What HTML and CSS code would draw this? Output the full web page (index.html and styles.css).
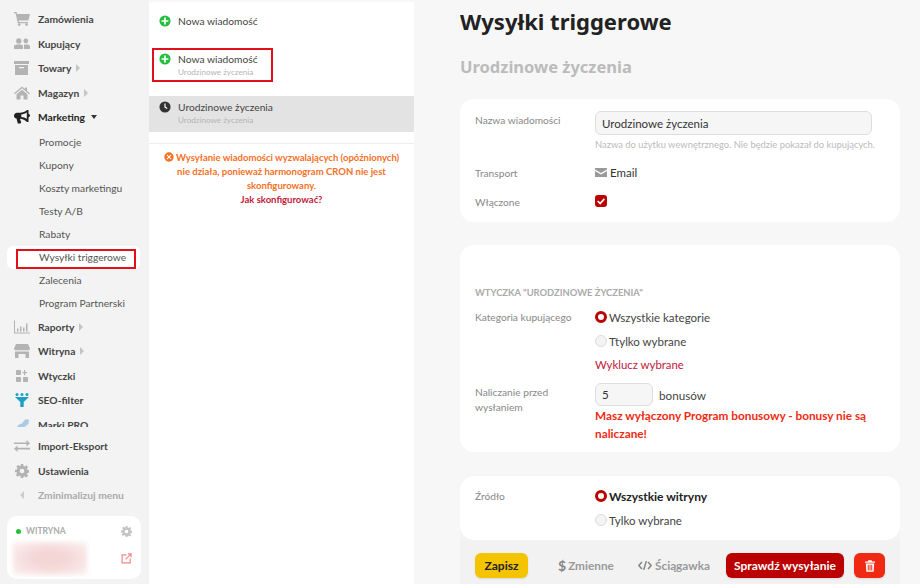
FILE: index.html
```html
<!DOCTYPE html>
<html lang="pl">
<head>
    <meta charset="UTF-8">
    <meta name="viewport" content="width=device-width, initial-scale=1.0">
    <title>Wysyłki triggerowe</title>
    <link rel="stylesheet" href="styles.css">
</head>
<body>

<aside class="sidebar">
    <nav class="menu menu-scroll">
        <a class="menu-item">
            <svg class="menu-icon" viewBox="0 0 16 14"><path d="M0 0h2.600l.5 2H16l-1.600 6.600H4.600l.3 1.400H14v1.300H3.800L1.600 1.300H0z"/><circle cx="5.200" cy="12.600" r="1.400"/><circle cx="12.600" cy="12.600" r="1.400"/></svg>
            Zamówienia
        </a>
        <a class="menu-item">
            <svg class="menu-icon" viewBox="0 0 16 12"><circle cx="4.800" cy="3" r="2.700"/><circle cx="11.800" cy="3" r="2.400"/><path d="M0 11V8.500C0 7 1.500 6.500 4.800 6.500S9 7 9 8.500V11zM10 11V7c.6-.3 1-.4 2-.4 2.700 0 4 .6 4 2V11z"/></svg>
            Kupujący
        </a>
        <a class="menu-item">
            <svg class="menu-icon" viewBox="0 0 16 14"><path d="M0 0h15v3H0zM1 4h13v10H1zM5 6v1.300h5V6z" fill-rule="evenodd"/></svg>
            Towary <span class="arrow-right"></span>
        </a>
        <a class="menu-item">
            <svg class="menu-icon" viewBox="0 0 16 13"><path d="M8 0l3 2.500V1h2v3.200L16 6.800l-.8.900L8 1.800.8 7.700 0 6.800zM8 3.300l5.500 4.500V13H9.500V9h-3v4h-4V7.800z"/></svg>
            Magazyn <span class="arrow-right"></span>
        </a>
        <a class="menu-item is-open">
            <svg class="menu-icon" viewBox="0 0 16 14"><path d="M13 0h1.500v3.800c1 .3 1.500 1 1.500 1.800s-.5 1.500-1.500 1.800V12H13c-1.800-2-4.500-3.200-7-3.300l1.200 3.800-.6 1H3.800l-1.300-5C1 8.500 0 7.300 0 5.800 0 4 1.300 2.700 3 2.700h3C8.500 2.700 11.200 2 13 0zM12.800 2.500C11.300 3.600 9.300 4.200 7.300 4.400v2.500c2 .2 4 .8 5.500 1.900z" fill-rule="evenodd"/></svg>
            Marketing <span class="arrow-down"></span>
        </a>
        <div class="submenu">
            <a>Promocje</a>
            <a>Kupony</a>
            <a>Koszty marketingu</a>
            <a>Testy A/B</a>
            <a>Rabaty</a>
            <a class="is-current"><span>Wysyłki triggerowe</span></a>
            <a>Zalecenia</a>
            <a>Program Partnerski</a>
        </div>
        <a class="menu-item">
            <svg class="menu-icon" viewBox="0 0 16 13"><path d="M0 0h1v12h15v1H0zM3 8h1.500v3H3zM6 6h1.500v5H6zM9 7h1.500v4H9zM12 3h1.500v8H12z"/></svg>
            Raporty <span class="arrow-right"></span>
        </a>
        <a class="menu-item">
            <svg class="menu-icon" viewBox="0 0 16 14"><path d="M2 0h12l2 4.500c0 1-.8 1.800-1.800 1.800H1.800C.8 6.300 0 5.500 0 4.500zM1 7.500h14V14h-3.500v-4h-7v4H1z"/></svg>
            Witryna <span class="arrow-right"></span>
        </a>
        <a class="menu-item">
            <svg class="menu-icon small" viewBox="0 0 12 12"><rect width="5" height="5" rx=".8"/><path d="M8 0h1.200v2H11v1.200H9.200v2H8v-2H6.500V2H8z"/><rect y="7" width="5" height="5" rx=".8"/><rect x="7" y="7" width="5" height="5" rx=".8"/></svg>
            Wtyczki
        </a>
        <a class="menu-item">
            <svg class="menu-icon teal" viewBox="0 0 14 14"><circle cx="2" cy="1.500" r="1.500"/><circle cx="7" cy="1.500" r="1.500"/><circle cx="12" cy="1.500" r="1.500"/><path d="M0 4h14L8.700 9v5H5.300V9z"/></svg>
            SEO-filter
        </a>
        <a class="menu-item">
            <svg class="menu-icon sky" viewBox="0 0 16 13"><path d="M0 12l5-6 3-1 3-4h4l-.6 4.500-4 3-1.500 3.500H6l1-3-3 1-2 3z"/></svg>
            Marki PRO
        </a>
    </nav>
    <nav class="menu menu-fixed">
        <a class="menu-item">
            <svg class="menu-icon" viewBox="0 0 16 12"><path d="M0 2.500h12.500V0L16 3.200l-3.500 3.200V4H0zM16 7.800H3.500V5.500L0 8.800 3.500 12V9.500H16z"/></svg>
            Import-Eksport
        </a>
        <a class="menu-item">
            <svg class="menu-icon" viewBox="0 0 24 24"><use href="#gear"/></svg>
            Ustawienia
        </a>
        <a class="menu-item is-muted">
            <span class="arrow-left"></span>
            Zminimalizuj menu
        </a>
    </nav>
    <div class="site-card">
        <div class="site-head">
            <span class="dot"></span>
            <span class="site-label">WITRYNA</span>
            <svg class="site-gear" viewBox="0 0 24 24"><use href="#gear"/></svg>
        </div>
        <div class="site-body">
            <div class="site-blur"></div>
            <svg class="site-link" viewBox="0 0 12 12" fill="none" stroke="#e88" stroke-width="1.300"><path d="M6 2H1.200v8.800H10V6M5 7l5.500-5.500M7.500 1h3.500v3.500"/></svg>
        </div>
    </div>
</aside>

<section class="messages">
    <a class="msg-row">
        <svg class="msg-icon" viewBox="0 0 14 14"><circle cx="7" cy="7" r="6.500" fill="#22c03c"/><path d="M6 3h2v3h3v2H8v3H6V8H3V6h3z" fill="#fff"/></svg>
        <div>Nowa wiadomość</div>
    </a>
    <a class="msg-row is-marked">
        <svg class="msg-icon" viewBox="0 0 14 14"><circle cx="7" cy="7" r="6.500" fill="#22c03c"/><path d="M6 3h2v3h3v2H8v3H6V8H3V6h3z" fill="#fff"/></svg>
        <div>Nowa wiadomość<small>Urodzinowe życzenia</small></div>
    </a>
    <a class="msg-row is-selected">
        <svg class="msg-icon" viewBox="0 0 14 14"><circle cx="7" cy="7" r="6.500" fill="#333"/><path d="M6.300 3h1.400v3.700l2.300 1.400-.7 1.200-3-1.800z" fill="#fff"/></svg>
        <div>Urodzinowe życzenia<small>Urodzinowe życzenia</small></div>
    </a>
    <div class="cron-note">
        <svg class="cron-icon" viewBox="0 0 14 14"><circle cx="7" cy="7" r="6.500" fill="#f5701f"/><path d="M4.500 3.500L7 6l2.500-2.500 1 1L8 7l2.500 2.500-1 1L7 8l-2.500 2.500-1-1L6 7 3.500 4.500z" fill="#fff"/></svg>
        Wysyłanie wiadomości wyzwalających (opóźnionych) nie działa, ponieważ harmonogram CRON nie jest skonfigurowany.
        <a>Jak skonfigurować?</a>
    </div>
</section>

<main class="content">
    <div class="content-scroll">
        <h1>Wysyłki triggerowe</h1>
        <h2>Urodzinowe życzenia</h2>

        <div class="card card-first">
            <div class="field">
                <label>Nazwa wiadomości</label>
                <div>
                    <input class="text-input" type="text" value="Urodzinowe życzenia">
                    <p class="hint">Nazwa do użytku wewnętrznego. Nie będzie pokazał do kupujących.</p>
                </div>
            </div>
            <div class="field">
                <label>Transport</label>
                <div class="value">
                    <svg class="mail-icon" viewBox="0 0 12 9"><path d="M0 0h12v1.500L6 5 0 1.500zM0 3l6 3.500L12 3v6H0z"/></svg>
                    Email
                </div>
            </div>
            <div class="field">
                <label>Włączone</label>
                <div class="value"><span class="checkbox"><svg viewBox="0 0 12 12"><path d="M2 6l3 3 5-5.500" fill="none" stroke="#fff" stroke-width="2"/></svg></span></div>
            </div>
        </div>

        <div class="card card-plugin">
            <h3>WTYCZKA "URODZINOWE ŻYCZENIA"</h3>
            <div class="field field-options">
                <label>Kategoria kupującego</label>
                <div class="options">
                    <div class="option"><span class="radio is-on"></span>Wszystkie kategorie</div>
                    <div class="option"><span class="radio"></span>Ttylko wybrane</div>
                    <a class="red-link">Wyklucz wybrane</a>
                </div>
            </div>
            <div class="field">
                <label>Naliczanie przed wysłaniem</label>
                <div>
                    <div class="bonus"><input class="num-input" type="text" value="5"> bonusów</div>
                    <p class="warning">Masz wyłączony Program bonusowy - bonusy nie są naliczane!</p>
                </div>
            </div>
        </div>

        <div class="card card-source">
            <div class="field field-options">
                <label>Źródło</label>
                <div class="options">
                    <div class="option is-bold"><span class="radio is-on"></span>Wszystkie witryny</div>
                    <div class="option"><span class="radio"></span>Tylko wybrane</div>
                </div>
            </div>
        </div>
    </div>

    <div class="actions">
        <button class="btn-save">Zapisz</button>
        <a class="action-link link-vars"><span class="dollar">$</span>Zmienne</a>
        <a class="action-link link-help"><svg class="code" viewBox="0 0 16 12" fill="none" stroke="#888" stroke-width="1.800"><path d="M4.500 2L1 6l3.500 4M11.500 2L15 6l-3.500 4M9.500 1L6.500 11"/></svg>Ściągawka</a>
        <button class="btn-test">Sprawdź wysyłanie</button>
        <button class="btn-delete"><svg viewBox="0 0 12 14"><path d="M4 0h4l.6 1.500H12V3H0V1.500h3.400zM1 4h10l-.6 10H1.600zM3.300 5.500v7h1.200v-7zM5.400 5.500v7h1.200v-7zM7.500 5.500v7h1.200v-7z" fill="#fff" fill-rule="evenodd"/></svg></button>
    </div>
</main>

<svg class="defs" width="0" height="0">
    <symbol id="gear" viewBox="0 0 24 24"><path fill-rule="evenodd" d="M10 0h4l.7 3.400 2 .8L19.600 2.300l2.800 2.800-1.900 2.900.8 2 3.400.7v4l-3.400.7-.8 2 1.900 2.900-2.800 2.800-2.900-1.900-2 .8L14 24h-4l-.7-3.400-2-.8-2.900 1.900-2.800-2.800 1.900-2.900-.8-2L0 14v-4l3.400-.7.800-2-1.900-2.900 2.800-2.800 2.900 1.900 2-.8zM12 8a4 4 0 1 0 0 8 4 4 0 0 0 0-8z"/></symbol>
</svg>

</body>
</html>
```

FILE: styles.css
```css
* {
    box-sizing: border-box;
}

body {
    font-family: Lato, "Noto Sans", Arial, sans-serif;
    margin: 0;
    height: 584px;
    overflow: hidden;
    display: flex;
    background-color: #f7f7f7;
    color: #333;
}

a {
    text-decoration: none;
    color: inherit;
}

.defs {
    position: absolute;
}

/* left menu */
.sidebar {
    width: 149px;
    flex-shrink: 0;
    background-color: #f3f3f3;
    padding-top: 7px;
}

.menu-scroll {
    height: 420px;
    overflow: hidden;
}

.menu-fixed {
    margin-top: 7px;
}

.menu-item {
    display: flex;
    align-items: center;
    height: 24.5px;
    padding-left: 14px;
    font-size: 10.250px;
    font-weight: 700;
    color: #444;
}

.menu-item.is-open {
    color: #222;
}

.menu-item.is-muted {
    color: #aaa;
}

.menu-icon {
    width: 16px;
    height: 14px;
    margin-right: 8px;
    fill: #b3b3b3;
    flex-shrink: 0;
}

.menu-icon.small {
    width: 12px;
    height: 12px;
    margin: 0 10px 0 2px;
}

.is-open .menu-icon {
    fill: #222;
}

.menu-icon.teal {
    fill: #1e9fc4;
}

.menu-icon.sky {
    fill: #a8cbe6;
}

.arrow-right,
.arrow-left,
.arrow-down {
    display: inline-block;
    width: 0;
    height: 0;
    border-style: solid;
}

.arrow-right {
    margin-left: 5px;
    border-width: 4px 0 4px 4px;
    border-color: transparent transparent transparent #c4c4c4;
}

.arrow-left {
    margin: 0 14px 0 6px;
    border-width: 4px 4px 4px 0;
    border-color: transparent #ccc transparent transparent;
}

.arrow-down {
    margin-left: 6px;
    border-width: 4px 3.500px 0;
    border-color: #333 transparent transparent;
}

.submenu {
    margin-top: 1px;
}

.submenu a {
    display: block;
    height: 23px;
    line-height: 23px;
    padding-left: 39px;
    font-size: 10.250px;
    color: #555;
}

.submenu a.is-current {
    margin: .5px 9px -.5px 7px;
    padding: 3px 0 0;
    background-color: #fff;
    border-radius: 6px;
}

.is-current span {
    display: block;
    margin-left: 9px;
    height: 20px;
    line-height: 13px;
    padding-left: 21px;
    border: 2px solid #e1101a;
    width: 120px;
    white-space: nowrap;
}

/* site box */
.site-card {
    margin: 8px 8px 0 7px;
    height: 63px;
    padding: 10px 6px;
    background-color: #fff;
    border-radius: 10px;
}

.site-head {
    display: flex;
    align-items: center;
    padding-left: 3px;
}

.dot {
    width: 5px;
    height: 5px;
    border-radius: 50%;
    background-color: #22c03c;
    margin-right: 5px;
}

.site-label {
    font-size: 8.500px;
    font-weight: 700;
    color: #aaa;
    flex-grow: 1;
}

.site-gear {
    width: 11px;
    height: 11px;
    fill: #c4c4c4;
    margin-right: 3px;
}

.site-body {
    display: flex;
    align-items: center;
    justify-content: space-between;
    margin-top: 5px;
}

.site-blur {
    width: 74px;
    height: 33px;
    background: radial-gradient(ellipse at center, #f4d6d6 30%, #fcf2f2 100%);
    filter: blur(2px);
}

.site-link {
    width: 11px;
    height: 11px;
    margin-right: 3px;
}

/* middle column */
.messages {
    width: 265px;
    flex-shrink: 0;
    background-color: #fff;
    padding-top: 1px;
    border-top: 2px solid #f7f7f7;
}

.msg-row {
    display: flex;
    padding: 0 10px;
    font-size: 10.250px;
    color: #444;
    line-height: 15px;
}

.msg-row:first-child {
    height: 36px;
    padding-top: 11px;
}

.msg-row.is-marked {
    margin: 9px 0 14px 3px;
    width: 121px;
    height: 34px;
    padding: 2px 0 0 5px;
    border: 2px solid #e1101a;
}

.msg-row.is-selected {
    height: 36px;
    padding-top: 4px;
    background-color: #e3e3e3;
}

.msg-icon {
    width: 12px;
    height: 12px;
    margin: 1px 7px 0 0;
    flex-shrink: 0;
}

.msg-row small {
    display: block;
    font-size: 8.150px;
    line-height: 10px;
    color: #b5b5b5;
}

.cron-note {
    margin-top: 11px;
    padding: 7px 10px 0;
    border-top: 1px solid #eee;
    text-align: center;
    font-size: 9.500px;
    font-weight: 700;
    line-height: 14px;
    color: #f5701f;
}

.cron-note a {
    display: block;
    color: #c0203a;
}

.cron-icon {
    width: 10px;
    height: 10px;
    vertical-align: -1px;
}

/* main column */
.content {
    flex-grow: 1;
    padding: 0 21px 0 46px;
    display: flex;
    flex-direction: column;
    height: 584px;
}

.content-scroll {
    height: 540px;
    overflow: hidden;
}

h1 {
    font-family: "Noto Sans", Arial, sans-serif;
    font-size: 22px;
    font-weight: 700;
    line-height: 28px;
    margin: 7px 0 0;
    color: #222;
}

h2 {
    font-family: "Noto Sans", Arial, sans-serif;
    font-size: 16.500px;
    font-weight: 700;
    line-height: 22px;
    margin: 21px 0 0;
    color: #bbb;
}

.card {
    background-color: #fff;
    border-radius: 14px;
    padding: 12px 15px;
}

.card-first {
    height: 123px;
    margin-top: 21px;
}

.card-plugin {
    height: 207px;
    margin-top: 23px;
    padding-top: 41px;
}

.card-source {
    height: 64px;
    margin-top: 24px;
    padding-top: 8px;
    box-shadow: 0 2px 6px rgba(0, 0, 0, 0.04);
}

.field {
    display: grid;
    grid-template-columns: 120px 1fr;
    font-size: 10.200px;
}

.field label {
    color: #888;
    line-height: 15px;
    padding-top: 2px;
    padding-right: 20px;
}

.field-options label {
    padding-top: 5px;
}

.text-input {
    display: block;
    width: 277px;
    height: 24px;
    padding: 0 6px;
    font: 11.500px Lato, "Noto Sans", Arial, sans-serif;
    color: #333;
    background-color: #f6f6f6;
    border: 1px solid #ddd;
    border-radius: 6px;
}

.hint {
    margin: 3px 0 13px;
    font-size: 9.400px;
    line-height: 13px;
    white-space: nowrap;
    color: #bbb;
}

.value {
    display: flex;
    align-items: center;
    font-size: 11.500px;
    height: 16px;
    margin-bottom: 13px;
}

.mail-icon {
    width: 12px;
    height: 9px;
    fill: #999;
    margin-right: 3px;
}

.checkbox {
    display: flex;
    width: 12px;
    height: 12px;
    padding: 1px;
    background-color: #bb0000;
    border-radius: 3px;
}

h3 {
    margin: 0 0 6px;
    font-size: 9.400px;
    line-height: 13px;
    font-weight: 700;
    color: #aaa;
}

.option {
    display: flex;
    align-items: center;
    font-size: 11.500px;
    height: 24px;
    color: #444;
}

.option.is-bold {
    font-size: 12px;
    font-weight: 700;
    color: #222;
}

.radio {
    width: 12px;
    height: 12px;
    margin-right: 2px;
    border: 1px solid #ddd;
    border-radius: 50%;
    background-color: #f3f3f3;
}

.radio.is-on {
    border: 3px solid #bb0000;
    background-color: #fff;
}

.red-link {
    display: block;
    font-size: 11.400px;
    line-height: 24px;
    color: #c0203a;
}

.options {
    margin-bottom: 6px;
}

.bonus {
    display: flex;
    align-items: center;
    font-size: 11.700px;
    color: #444;
    gap: 6px;
}

.num-input {
    width: 58px;
    height: 23px;
    padding: 0 6px;
    font: 11.500px Lato, "Noto Sans", Arial, sans-serif;
    color: #333;
    background-color: #f6f6f6;
    border: 1px solid #ddd;
    border-radius: 6px;
}

.warning {
    margin: 1px 0 0;
    font-size: 11.800px;
    font-weight: 700;
    line-height: 17.500px;
    color: #f02a12;
}

/* bottom bar */
.actions {
    height: 44px;
    display: flex;
    align-items: center;
    padding: 7px 15px 0;
    background-color: #f2f2f2;
}

.actions button {
    border: none;
    height: 25px;
    border-radius: 6px;
    font: 700 12px Lato, "Noto Sans", Arial, sans-serif;
    box-shadow: 0 1px 2px rgba(0, 0, 0, 0.1);
}

.btn-save {
    width: 53px;
    background-color: #f5c400;
    color: #222;
}

.action-link {
    display: flex;
    align-items: center;
    font-size: 11.800px;
    font-weight: 700;
    color: #999;
}

.link-vars {
    width: 85px;
    padding-left: 30px;
}

.link-help {
    width: 113px;
    padding-left: 25px;
}

.dollar {
    font-size: 14px;
    color: #888;
    margin-right: 2px;
}

.code {
    width: 14px;
    height: 11px;
    margin-right: 3px;
}

.btn-test {
    width: 118px;
    background-color: #bb0000;
    color: #fff;
}

.btn-delete {
    width: 31px;
    margin-left: 10px;
    background-color: #f02a12;
    display: flex;
    align-items: center;
    justify-content: center;
}

.btn-delete svg {
    width: 10px;
    height: 12px;
}
```
